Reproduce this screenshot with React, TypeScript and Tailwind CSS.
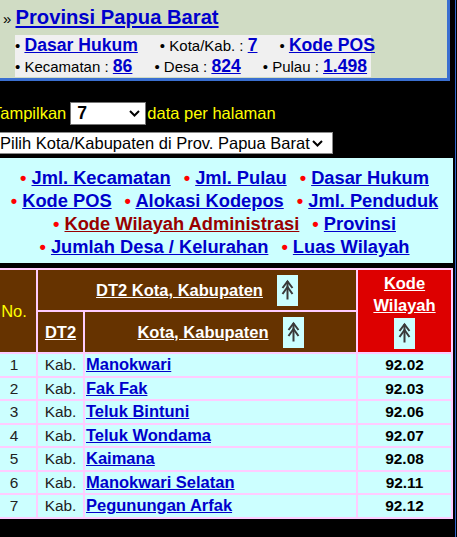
import React from 'react';

const kabupaten = [
  { no: 1, jenis: 'Kab.', nama: 'Manokwari', kode: '92.02' },
  { no: 2, jenis: 'Kab.', nama: 'Fak Fak', kode: '92.03' },
  { no: 3, jenis: 'Kab.', nama: 'Teluk Bintuni', kode: '92.06' },
  { no: 4, jenis: 'Kab.', nama: 'Teluk Wondama', kode: '92.07' },
  { no: 5, jenis: 'Kab.', nama: 'Kaimana', kode: '92.08' },
  { no: 6, jenis: 'Kab.', nama: 'Manokwari Selatan', kode: '92.11' },
  { no: 7, jenis: 'Kab.', nama: 'Pegunungan Arfak', kode: '92.12' },
];

const navRows: { label: string; active?: boolean }[][] = [
  [{ label: 'Jml. Kecamatan' }, { label: 'Jml. Pulau' }, { label: 'Dasar Hukum' }],
  [{ label: 'Kode POS' }, { label: 'Alokasi Kodepos' }, { label: 'Jml. Penduduk' }],
  [{ label: 'Kode Wilayah Administrasi', active: true }, { label: 'Provinsi' }],
  [{ label: 'Jumlah Desa / Kelurahan' }, { label: 'Luas Wilayah' }],
];

const SortIcon = () => (
  <span className="inline-flex w-[21px] h-[31px] bg-[#ccffff] shrink-0">
    <svg width="21" height="31" viewBox="0 0 21 31">
      <path d="M10.5 6 V24.5" stroke="#3a3a3a" strokeWidth="2" />
      <path
        d="M5.5 13 L10.5 6.5 L15.5 13 M5.5 19 L10.5 12 L15.5 19"
        fill="none"
        stroke="#3a3a3a"
        strokeWidth="2"
      />
    </svg>
  </span>
);

const Chevron = () => (
  <svg width="11" height="7" viewBox="0 0 11 7" className="shrink-0">
    <path d="M1 1 L5.5 5.5 L10 1" fill="none" stroke="#000" strokeWidth="2" />
  </svg>
);

const Stat = ({ label, value }: { label: string; value: string }) => (
  <span className="whitespace-nowrap">
    <span className="text-[15px] leading-[18px]">• {label} : </span>
    <a className="text-[17.6px] font-bold text-[#0000cc] underline">{value}</a>
  </span>
);

export default function App() {
  return (
    <div className="w-[457px] h-[537px] overflow-hidden bg-black font-['Liberation_Sans',Arial,sans-serif]">
      <div className="w-[456px] h-full border-r border-[#3366cc] overflow-hidden">
        {/* Province header box */}
        <div className="-ml-[10px] w-[460px] h-[81px] bg-[#d0dcc4] border-r-[3px] border-b-[3px] border-[#3a6fd0] pl-[13px] pt-[6px] text-black">
          <div className="h-[23px] leading-[23px] whitespace-nowrap">
            <span className="text-[15px]">» </span>
            <a className="text-[20.2px] font-bold text-[#0000cc] underline">Provinsi Papua Barat</a>
          </div>
          <div className="mt-[6px] ml-[12px] w-[356px] h-[42px] bg-[#f0f0f0] text-[17.6px]">
            <div className="h-[21px] leading-[21px] flex gap-[22px] whitespace-nowrap">
              <span>
                <span className="text-[15px] leading-[18px]">• </span>
                <a className="font-bold text-[#0000cc] underline">Dasar Hukum</a>
              </span>
              <Stat label="Kota/Kab." value="7" />
              <span>
                <span className="text-[15px] leading-[18px]">• </span>
                <a className="font-bold text-[#0000cc] underline">Kode POS</a>
              </span>
            </div>
            <div className="h-[21px] leading-[21px] flex gap-[22px] whitespace-nowrap">
              <Stat label="Kecamatan" value="86" />
              <Stat label="Desa" value="824" />
              <Stat label="Pulau" value="1.498" />
            </div>
          </div>
        </div>

        {/* Paging + city selects */}
        <div className="mt-[21px] -ml-[8px] h-[23px] flex items-center text-[16.5px] text-[#ffff00] whitespace-nowrap">
          <span>Tampilkan</span>
          <div className="ml-[4px] w-[76px] h-[23px] border border-[#767676] bg-white flex items-center justify-between pl-[6px] pr-[5px]">
            <span className="text-[17.6px] font-bold text-black">7</span>
            <Chevron />
          </div>
          <span className="ml-[1px]">data per halaman</span>
        </div>
        <div className="mt-[7px] -ml-[3px] w-[336px] h-[22px] border border-[#8a8a8a] bg-white flex items-center justify-between pl-[2px] pr-[9px] text-[16.5px] text-black whitespace-nowrap">
          <span>Pilih Kota/Kabupaten di Prov. Papua Barat</span>
          <Chevron />
        </div>

        {/* Navigation links */}
        <div className="mt-[4px] -ml-[4px] w-[457px] h-[105px] bg-[#ccffff] pt-[8px] flex flex-col items-center text-[18.3px] font-bold">
          {navRows.map((row, i) => (
            <div key={i} className="h-[23px] leading-[23px] flex gap-[13px] whitespace-nowrap">
              {row.map((item) => (
                <span key={item.label}>
                  <span className="text-[#ff0000]">• </span>
                  <a className={`underline ${item.active ? 'text-[#990000]' : 'text-[#0000cc]'}`}>
                    {item.label}
                  </a>
                </span>
              ))}
            </div>
          ))}
        </div>

        {/* Kabupaten table */}
        <div className="mt-[5px] -ml-[10px] w-[463px] grid grid-cols-[44px_45px_271px_93px] grid-rows-[40px_40px_repeat(7,21.5px)] gap-[2px] p-[2px] bg-[#ffccff]">
          <div className="row-span-2 col-start-1 row-start-1 bg-[#663300] flex items-center justify-center text-[16.5px] text-[#ffff00]">
            No.
          </div>
          <div className="col-start-2 col-span-2 row-start-1 bg-[#663300] flex items-center justify-center gap-[14px]">
            <a className="text-[16.5px] font-bold text-white underline">DT2 Kota, Kabupaten</a>
            <SortIcon />
          </div>
          <div className="col-start-4 row-start-1 row-span-2 bg-[#dd0000] flex flex-col items-center pt-[2px]">
            <a className="text-[16.5px] leading-[22px] font-bold text-white underline">Kode</a>
            <a className="text-[16.5px] leading-[22px] font-bold text-white underline">Wilayah</a>
            <div className="mt-[2px]">
              <SortIcon />
            </div>
          </div>
          <div className="col-start-2 row-start-2 bg-[#663300] flex items-center justify-center">
            <a className="text-[16.5px] font-bold text-white underline">DT2</a>
          </div>
          <div className="col-start-3 row-start-2 bg-[#663300] flex items-center justify-center gap-[14px]">
            <a className="text-[16.5px] font-bold text-white underline">Kota, Kabupaten</a>
            <SortIcon />
          </div>

          {kabupaten.map((k) => (
            <React.Fragment key={k.no}>
              <div className="bg-[#ccffff] flex items-center justify-center text-[15.4px] text-[#222]">{k.no}</div>
              <div className="bg-[#ccffff] flex items-center justify-center text-[15.4px] text-[#222]">{k.jenis}</div>
              <div className="bg-[#ccffff] flex items-center pl-[1px] whitespace-nowrap">
                <a className="text-[16.5px] font-bold text-[#0000cc] underline">{k.nama}</a>
              </div>
              <div className="bg-[#ccffff] flex items-center justify-center text-[15.4px] font-bold text-black">
                {k.kode}
              </div>
            </React.Fragment>
          ))}
        </div>
      </div>
    </div>
  );
}
